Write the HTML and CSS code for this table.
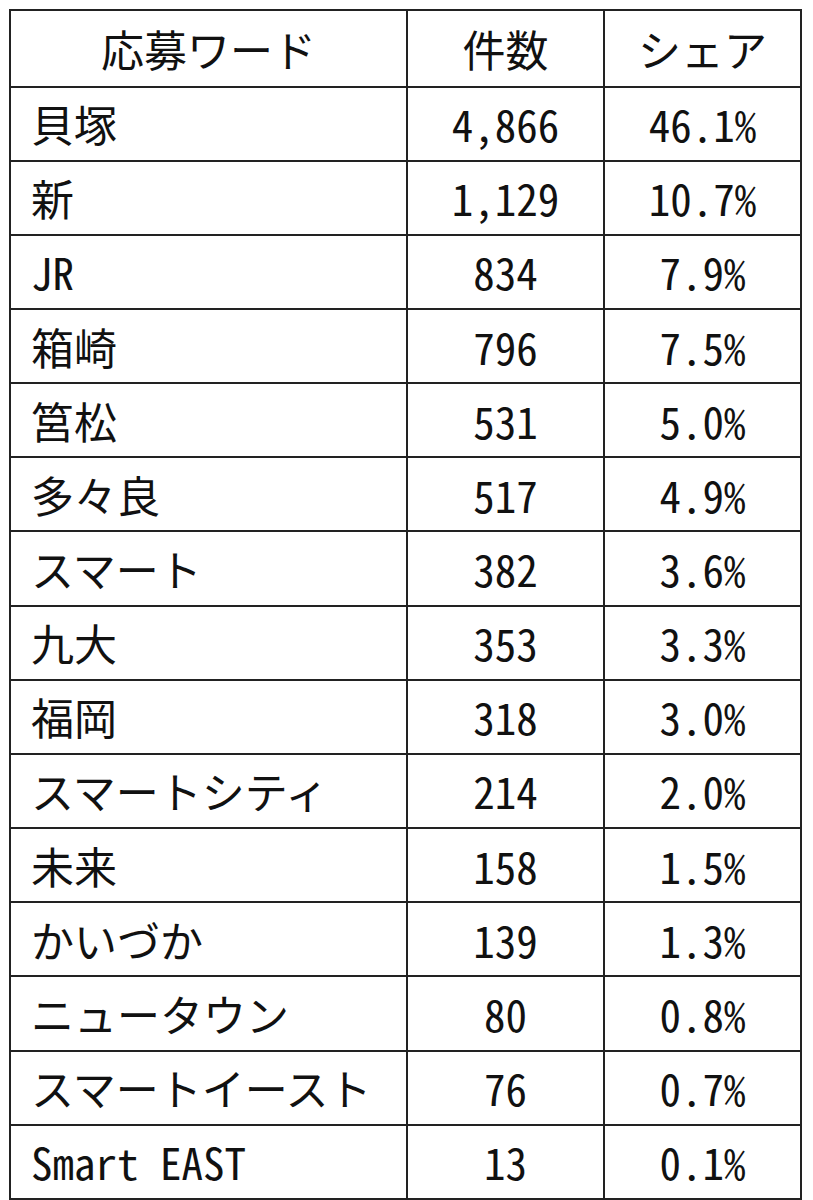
FILE: index.html
```html
<!DOCTYPE html>
<html lang="ja">
<head>
<meta charset="utf-8">
<title>応募ワード</title>
<link rel="stylesheet" href="styles.css">
</head>
<body>
<table class="word-table">
  <thead>
    <tr class="head-row">
      <th class="col-word">応募ワード</th>
      <th class="col-num">件数</th>
      <th class="col-share">シェア</th>
    </tr>
  </thead>
  <tbody>
    <tr><td class="word">貝塚</td><td class="num">4,866</td><td class="num">46.1%</td></tr>
    <tr><td class="word">新</td><td class="num">1,129</td><td class="num">10.7%</td></tr>
    <tr><td class="word">JR</td><td class="num">834</td><td class="num">7.9%</td></tr>
    <tr><td class="word">箱崎</td><td class="num">796</td><td class="num">7.5%</td></tr>
    <tr><td class="word">筥松</td><td class="num">531</td><td class="num">5.0%</td></tr>
    <tr><td class="word">多々良</td><td class="num">517</td><td class="num">4.9%</td></tr>
    <tr><td class="word">スマート</td><td class="num">382</td><td class="num">3.6%</td></tr>
    <tr><td class="word">九大</td><td class="num">353</td><td class="num">3.3%</td></tr>
    <tr><td class="word">福岡</td><td class="num">318</td><td class="num">3.0%</td></tr>
    <tr><td class="word">スマートシティ</td><td class="num">214</td><td class="num">2.0%</td></tr>
    <tr><td class="word">未来</td><td class="num">158</td><td class="num">1.5%</td></tr>
    <tr><td class="word">かいづか</td><td class="num">139</td><td class="num">1.3%</td></tr>
    <tr><td class="word">ニュータウン</td><td class="num">80</td><td class="num">0.8%</td></tr>
    <tr><td class="word">スマートイースト</td><td class="num">76</td><td class="num">0.7%</td></tr>
    <tr><td class="word">Smart EAST</td><td class="num">13</td><td class="num">0.1%</td></tr>
  </tbody>
</table>
</body>
</html>
```

FILE: styles.css
```css
html, body {
  margin: 0;
  padding: 0;
  background: #ffffff;
}

body {
  padding: 9px 0 0 9px;
  font-family: "Noto Sans CJK JP", "Noto Sans", sans-serif;
  font-feature-settings: "hwid" 1;
  color: #111111;
}

.word-table {
  border-collapse: collapse;
  table-layout: fixed;
  width: 793px;
}

.word-table th,
.word-table td {
  border: 2px solid #222222;
  font-size: 43px;
  font-weight: 400;
  line-height: 1;
  padding: 0;
  vertical-align: middle;
  white-space: nowrap;
}

.col-word {
  width: 395px;
}

.col-num,
.col-share {
  width: 195px;
}

.head-row th {
  height: 74.5px;
  text-align: center;
}

.word-table tbody td {
  height: 72.17px;
}

.word {
  text-align: left;
  padding-left: 20px !important;
}

.num {
  text-align: center;
}
```
